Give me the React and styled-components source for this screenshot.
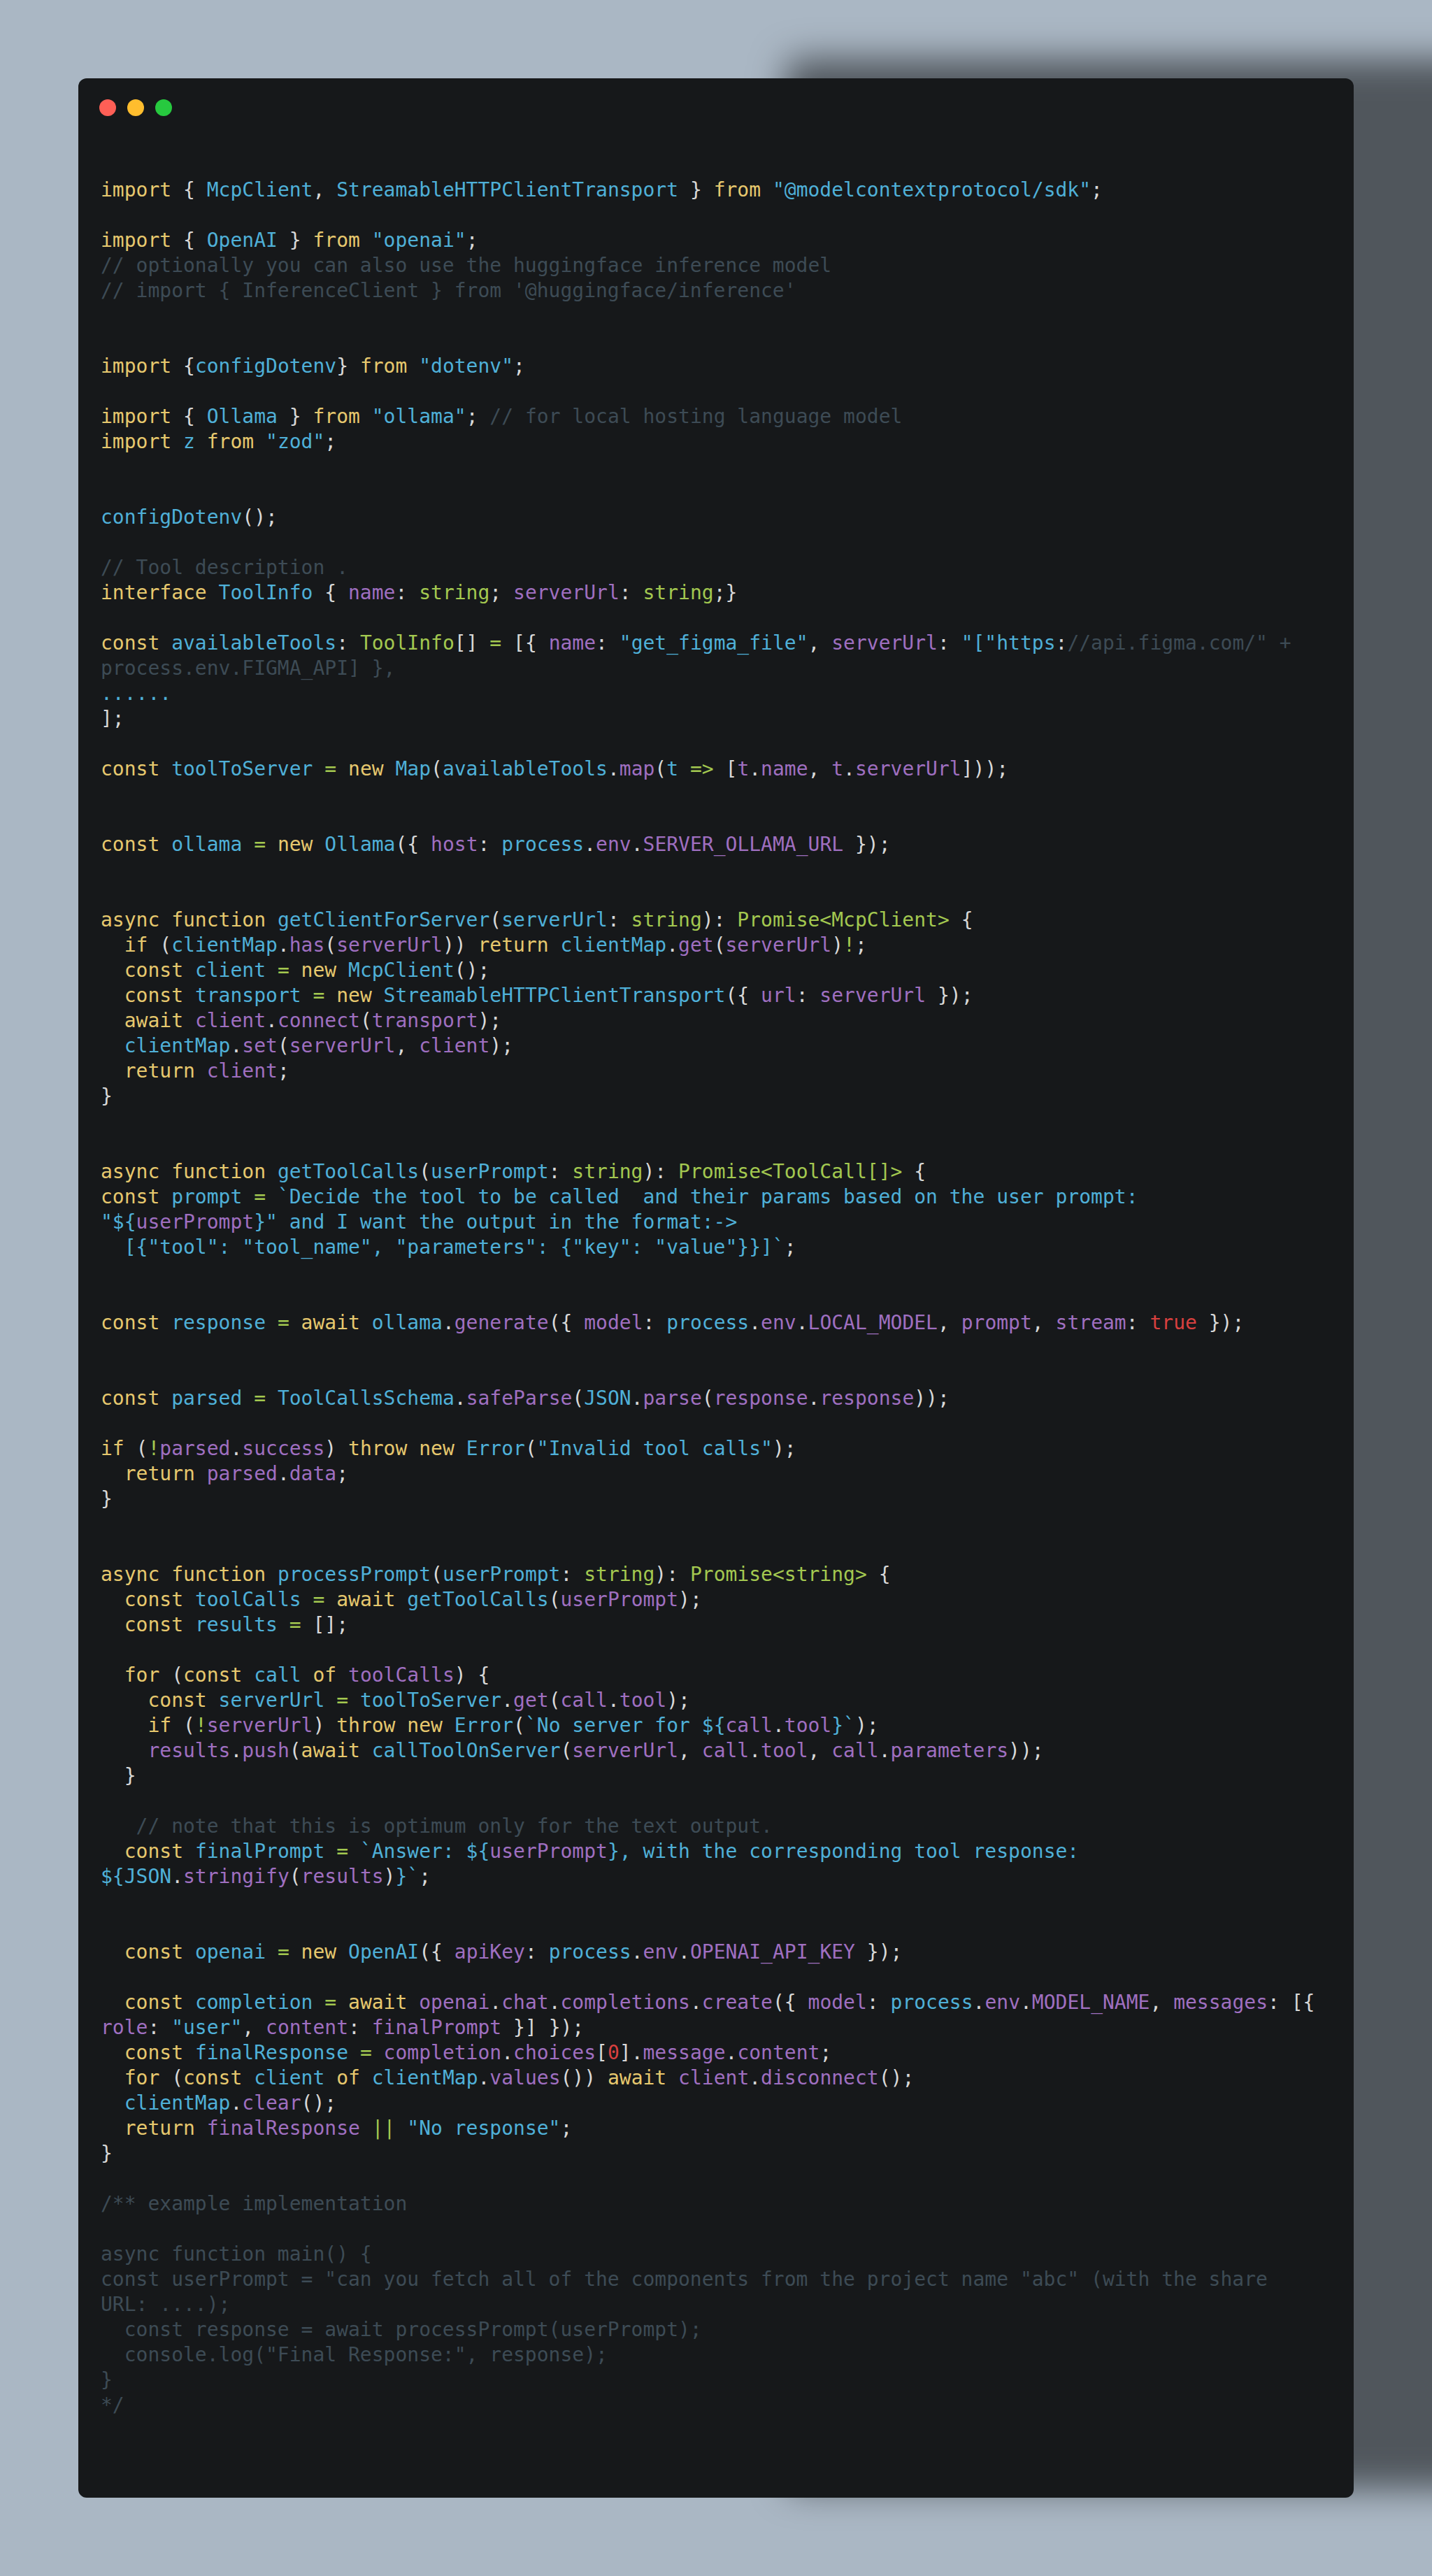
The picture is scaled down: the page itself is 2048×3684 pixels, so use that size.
import React from 'react'
import styled, { createGlobalStyle } from 'styled-components'

const GlobalStyle = createGlobalStyle`
  html, body {
    margin: 0;
    padding: 0;
    background: #aab7c4;
  }
`

const colors = {
  k: '#e6c86e',
  b: '#4fb0d8',
  p: '#9f6fc0',
  g: '#a3c850',
  w: '#d8d8d8',
  c: '#3d4b55',
  r: '#d8403f',
}

const Page = styled.div`
  box-sizing: border-box;
  width: 2048px;
  height: 3684px;
  padding: 112px;
  overflow: hidden;
  background: #aab7c4;
`

const Window = styled.div`
  box-sizing: border-box;
  height: 3460px;
  padding: 30px 32px 0 30px;
  border-radius: 12px;
  background: #16181a;
  box-shadow: 1020px -20px 50px 8px rgba(0, 0, 0, 0.53);
`

const Dots = styled.div`
  display: flex;
  gap: 16px;
`

const Dot = styled.span`
  width: 24px;
  height: 24px;
  border-radius: 50%;
  background: ${(p) => p.$color};
`

const Code = styled.div`
  margin: 88px 0 0 2px;
  font-family: 'DejaVu Sans Mono', monospace;
  font-size: 28px;
  line-height: 36px;
`

const Line = styled.div`
  height: 36px;
  white-space: pre;
`

const Tok = styled.span`
  color: ${(p) => colors[p.$kind]};
`

// one string per row, "kind|text" tokens joined by ~
const source = [
  'k|import~w| { ~b|McpClient~w|, ~b|StreamableHTTPClientTransport~w| } ~k|from~w| ~b|"@modelcontextprotocol/sdk"~w|;',
  '',
  'k|import~w| { ~b|OpenAI~w| } ~k|from~w| ~b|"openai"~w|;',
  'c|// optionally you can also use the huggingface inference model',
  "c|// import { InferenceClient } from '@huggingface/inference'",
  '',
  '',
  'k|import~w| {~b|configDotenv~w|} ~k|from~w| ~b|"dotenv"~w|;',
  '',
  'k|import~w| { ~b|Ollama~w| } ~k|from~w| ~b|"ollama"~w|; ~c|// for local hosting language model',
  'k|import~w| ~b|z~w| ~k|from~w| ~b|"zod"~w|;',
  '',
  '',
  'b|configDotenv~w|();',
  '',
  'c|// Tool description .',
  'k|interface~w| ~b|ToolInfo~w| { ~p|name~w|: ~g|string~w|; ~p|serverUrl~w|: ~g|string~w|;}',
  '',
  'k|const~w| ~b|availableTools~w|: ~g|ToolInfo~w|[] ~g|=~w| [{ ~p|name~w|: ~b|"get_figma_file"~w|, ~p|serverUrl~w|: ~b|"["https~w|:~c|//api.figma.com/" +',
  'c|process.env.FIGMA_API] },',
  'b|......',
  'w|];',
  '',
  'k|const~w| ~b|toolToServer~w| ~g|=~w| ~k|new~w| ~b|Map~w|(~b|availableTools~w|.~p|map~w|(~b|t~w| ~g|=>~w| [~p|t~w|.~p|name~w|, ~p|t~w|.~p|serverUrl~w|]));',
  '',
  '',
  'k|const~w| ~b|ollama~w| ~g|=~w| ~k|new~w| ~b|Ollama~w|({ ~p|host~w|: ~b|process~w|.~p|env~w|.~p|SERVER_OLLAMA_URL~w| });',
  '',
  '',
  'k|async~w| ~k|function~w| ~b|getClientForServer~w|(~b|serverUrl~w|: ~g|string~w|): ~g|Promise<McpClient>~w| {',
  'w|  ~k|if~w| (~b|clientMap~w|.~p|has~w|(~p|serverUrl~w|)) ~k|return~w| ~b|clientMap~w|.~p|get~w|(~p|serverUrl~w|)~g|!~w|;',
  'w|  ~k|const~w| ~b|client~w| ~g|=~w| ~k|new~w| ~b|McpClient~w|();',
  'w|  ~k|const~w| ~b|transport~w| ~g|=~w| ~k|new~w| ~b|StreamableHTTPClientTransport~w|({ ~p|url~w|: ~p|serverUrl~w| });',
  'w|  ~k|await~w| ~p|client~w|.~p|connect~w|(~p|transport~w|);',
  'w|  ~b|clientMap~w|.~p|set~w|(~p|serverUrl~w|, ~p|client~w|);',
  'w|  ~k|return~w| ~p|client~w|;',
  'w|}',
  '',
  '',
  'k|async~w| ~k|function~w| ~b|getToolCalls~w|(~b|userPrompt~w|: ~g|string~w|): ~g|Promise<ToolCall[]>~w| {',
  'k|const~w| ~b|prompt~w| ~g|=~w| ~b|`Decide the tool to be called  and their params based on the user prompt:',
  'b|"${~p|userPrompt~b|}" and I want the output in the format:->',
  'b|  [{"tool": "tool_name", "parameters": {"key": "value"}}]`~w|;',
  '',
  '',
  'k|const~w| ~b|response~w| ~g|=~w| ~k|await~w| ~b|ollama~w|.~p|generate~w|({ ~p|model~w|: ~b|process~w|.~p|env~w|.~p|LOCAL_MODEL~w|, ~p|prompt~w|, ~p|stream~w|: ~r|true~w| });',
  '',
  '',
  'k|const~w| ~b|parsed~w| ~g|=~w| ~b|ToolCallsSchema~w|.~p|safeParse~w|(~b|JSON~w|.~p|parse~w|(~p|response~w|.~p|response~w|));',
  '',
  'k|if~w| (~g|!~p|parsed~w|.~p|success~w|) ~k|throw~w| ~k|new~w| ~b|Error~w|(~b|"Invalid tool calls"~w|);',
  'w|  ~k|return~w| ~p|parsed~w|.~p|data~w|;',
  'w|}',
  '',
  '',
  'k|async~w| ~k|function~w| ~b|processPrompt~w|(~b|userPrompt~w|: ~g|string~w|): ~g|Promise<string>~w| {',
  'w|  ~k|const~w| ~b|toolCalls~w| ~g|=~w| ~k|await~w| ~b|getToolCalls~w|(~p|userPrompt~w|);',
  'w|  ~k|const~w| ~b|results~w| ~g|=~w| [];',
  '',
  'w|  ~k|for~w| (~k|const~w| ~b|call~w| ~k|of~w| ~p|toolCalls~w|) {',
  'w|    ~k|const~w| ~b|serverUrl~w| ~g|=~w| ~b|toolToServer~w|.~p|get~w|(~p|call~w|.~p|tool~w|);',
  'w|    ~k|if~w| (~g|!~p|serverUrl~w|) ~k|throw~w| ~k|new~w| ~b|Error~w|(~b|`No server for ${~p|call~w|.~p|tool~b|}`~w|);',
  'w|    ~p|results~w|.~p|push~w|(~k|await~w| ~b|callToolOnServer~w|(~p|serverUrl~w|, ~p|call~w|.~p|tool~w|, ~p|call~w|.~p|parameters~w|));',
  'w|  }',
  '',
  'c|   // note that this is optimum only for the text output.',
  'w|  ~k|const~w| ~b|finalPrompt~w| ~g|=~w| ~b|`Answer: ${~p|userPrompt~b|}, with the corresponding tool response:',
  'b|${JSON~w|.~p|stringify~w|(~p|results~w|)~b|}`~w|;',
  '',
  '',
  'w|  ~k|const~w| ~b|openai~w| ~g|=~w| ~k|new~w| ~b|OpenAI~w|({ ~p|apiKey~w|: ~b|process~w|.~p|env~w|.~p|OPENAI_API_KEY~w| });',
  '',
  'w|  ~k|const~w| ~b|completion~w| ~g|=~w| ~k|await~w| ~p|openai~w|.~p|chat~w|.~p|completions~w|.~p|create~w|({ ~p|model~w|: ~b|process~w|.~p|env~w|.~p|MODEL_NAME~w|, ~p|messages~w|: [{',
  'p|role~w|: ~b|"user"~w|, ~p|content~w|: ~p|finalPrompt~w| }] });',
  'w|  ~k|const~w| ~b|finalResponse~w| ~g|=~w| ~p|completion~w|.~p|choices~w|[~r|0~w|].~p|message~w|.~p|content~w|;',
  'w|  ~k|for~w| (~k|const~w| ~b|client~w| ~k|of~w| ~b|clientMap~w|.~p|values~w|()) ~k|await~w| ~p|client~w|.~p|disconnect~w|();',
  'w|  ~b|clientMap~w|.~p|clear~w|();',
  'w|  ~k|return~w| ~p|finalResponse~w| ~g|||~w| ~b|"No response"~w|;',
  'w|}',
  '',
  'c|/** example implementation',
  '',
  'c|async function main() {',
  'c|const userPrompt = "can you fetch all of the components from the project name "abc" (with the share',
  'c|URL: ....);',
  'c|  const response = await processPrompt(userPrompt);',
  'c|  console.log("Final Response:", response);',
  'c|}',
  'c|*/',
]

const parseLine = (row) =>
  row
    .split('~')
    .filter(Boolean)
    .map((part) => ({ kind: part[0], text: part.slice(2) }))

const App = () => (
  <Page>
    <GlobalStyle />
    <Window>
      <Dots>
        <Dot $color="#ff5f56" />
        <Dot $color="#ffbd2e" />
        <Dot $color="#27c93f" />
      </Dots>
      <Code>
        {source.map((row, i) => (
          <Line key={i}>
            {parseLine(row).map((tok, j) => (
              <Tok key={j} $kind={tok.kind}>
                {tok.text}
              </Tok>
            ))}
          </Line>
        ))}
      </Code>
    </Window>
  </Page>
)

export default App
